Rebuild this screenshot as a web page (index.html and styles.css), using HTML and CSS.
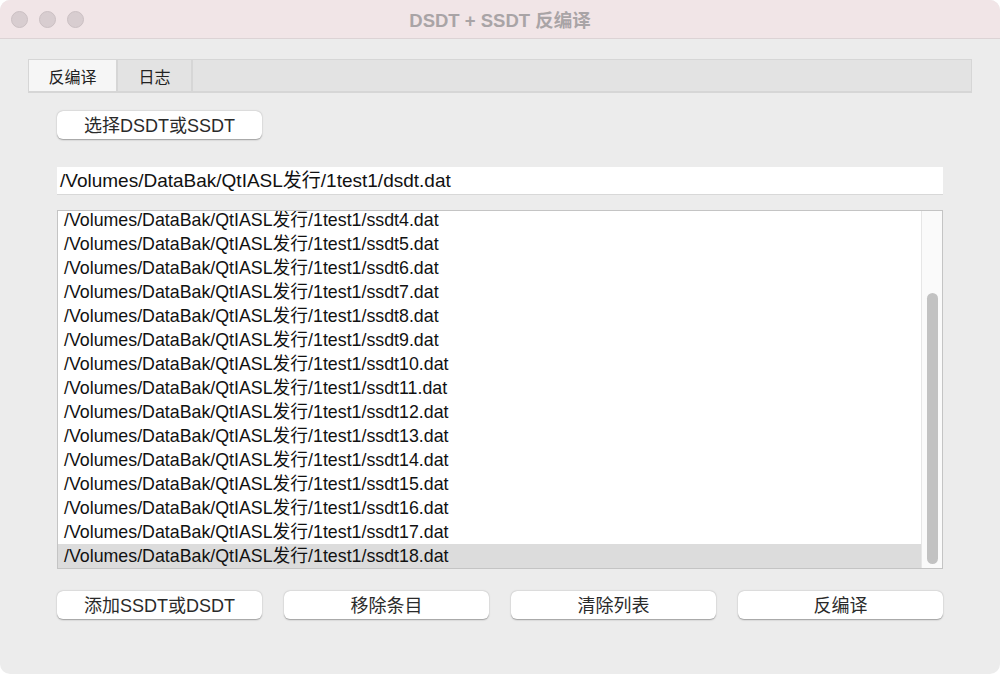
FILE: index.html
```html
<!DOCTYPE html>
<html lang="zh-CN">
<head>
  <meta charset="UTF-8">
  <title>DSDT + SSDT 反编译</title>
  <link rel="stylesheet" href="styles.css">
</head>
<body>
  <div class="window">
    <!-- barra de titulo -->
    <div class="titlebar">
      <div class="lights">
        <span class="light"></span>
        <span class="light"></span>
        <span class="light"></span>
      </div>
      <div class="title">DSDT + SSDT 反编译</div>
    </div>

    <div class="content">
      <div class="tabs">
        <div class="tab active">反编译</div>
        <div class="tab">日志</div>
      </div>

      <div class="pane">
        <div class="row-top">
          <button class="btn">选择DSDT或SSDT</button>
        </div>

        <div class="path">/Volumes/DataBak/QtIASL发行/1test1/dsdt.dat</div>

        <div class="list">
          <div class="list-body">
            <div class="items" id="items"></div>
          </div>
          <div class="scrollbar"><div class="thumb"></div></div>
        </div>

        <div class="actions">
          <button class="btn">添加SSDT或DSDT</button>
          <button class="btn">移除条目</button>
          <button class="btn">清除列表</button>
          <button class="btn">反编译</button>
        </div>
      </div>
    </div>
  </div>

  <script>
    // lista de tablas SSDT cargadas
    const items = document.getElementById("items");
    for (let i = 4; i <= 18; i++) {
      const div = document.createElement("div");
      div.className = "item" + (i === 18 ? " selected" : "");
      div.textContent = "/Volumes/DataBak/QtIASL发行/1test1/ssdt" + i + ".dat";
      items.appendChild(div);
    }
  </script>
</body>
</html>
```

FILE: styles.css
```css
* {
  box-sizing: border-box;
}

body {
  margin: 0;
  background-color: white;
  font-family: "Liberation Sans", "Noto Sans CJK SC", sans-serif;
}

.window {
  width: 1000px;
  height: 674px;
  background-color: #ececec;
  border-radius: 10px;
  overflow: hidden;
}

.titlebar {
  height: 39px;
  background-color: #f1e5e7;
  border-bottom: 1px solid #dcd3d5;
  display: flex;
  align-items: center;
  position: relative;
}

.lights {
  display: flex;
  gap: 11px;
  padding-left: 11px;
}

.light {
  width: 17px;
  height: 17px;
  border-radius: 50%;
  background-color: #d8cdd0;
  border: 1px solid #cbc0c3;
}

.title {
  position: absolute;
  left: 0;
  right: 0;
  top: 6px;
  text-align: center;
  font-weight: bold;
  font-size: 18.5px;
  color: #a9a4a6;
}

.content {
  padding: 20px 28px 0 28px;
}

.tabs {
  display: flex;
  height: 34px;
  background-color: #e3e3e3;
  border: 1px solid #d6d6d6;
  border-bottom-width: 2px;
}

.tab {
  width: 89px;
  display: flex;
  align-items: center;
  justify-content: center;
  font-size: 16px;
  color: #222;
  border-right: 2px solid #d6d6d6;
}

.tab + .tab {
  width: 75px;
}

.tab.active {
  background-color: #f6f6f6;
}

.pane {
  padding: 18px 29px 0 29px;
}

.btn {
  font-family: inherit;
  font-size: 18px;
  color: #2a2a2a;
  background-color: white;
  border: none;
  border-radius: 6px;
  height: 28px;
  width: 205px;
  padding: 0 0 2px 0;
  box-shadow: 0 0.5px 1.5px rgba(0,0,0,0.35);
}

.path {
  margin-top: 28px;
  height: 28px;
  background-color: white;
  border-bottom: 1px solid #d8d8d8;
  font-size: 19px;
  color: #111;
  line-height: 27px;
  padding-left: 3px;
}

.list {
  margin-top: 15px;
  height: 359px;
  display: flex;
  background-color: white;
  border: 1px solid #c4c4c4;
}

.list-body {
  flex: 1;
  overflow: hidden;
}

.items {
  margin-top: -3px;
}

.item {
  height: 24px;
  line-height: 25px;
  padding-left: 6px;
  font-size: 17.8px;
  color: #111;
}

.item.selected {
  background-color: #dcdcdc;
}

.scrollbar {
  width: 21px;
  background-color: #fafafa;
  border-left: 1px solid #e6e6e6;
  display: flex;
  flex-direction: column;
  justify-content: flex-end;
  align-items: center;
  padding-bottom: 4px;
}

.thumb {
  width: 11px;
  height: 271px;
  border-radius: 6px;
  background-color: #c2c2c2;
}

.actions {
  margin-top: 22px;
  display: flex;
  gap: 22px;
}
```
